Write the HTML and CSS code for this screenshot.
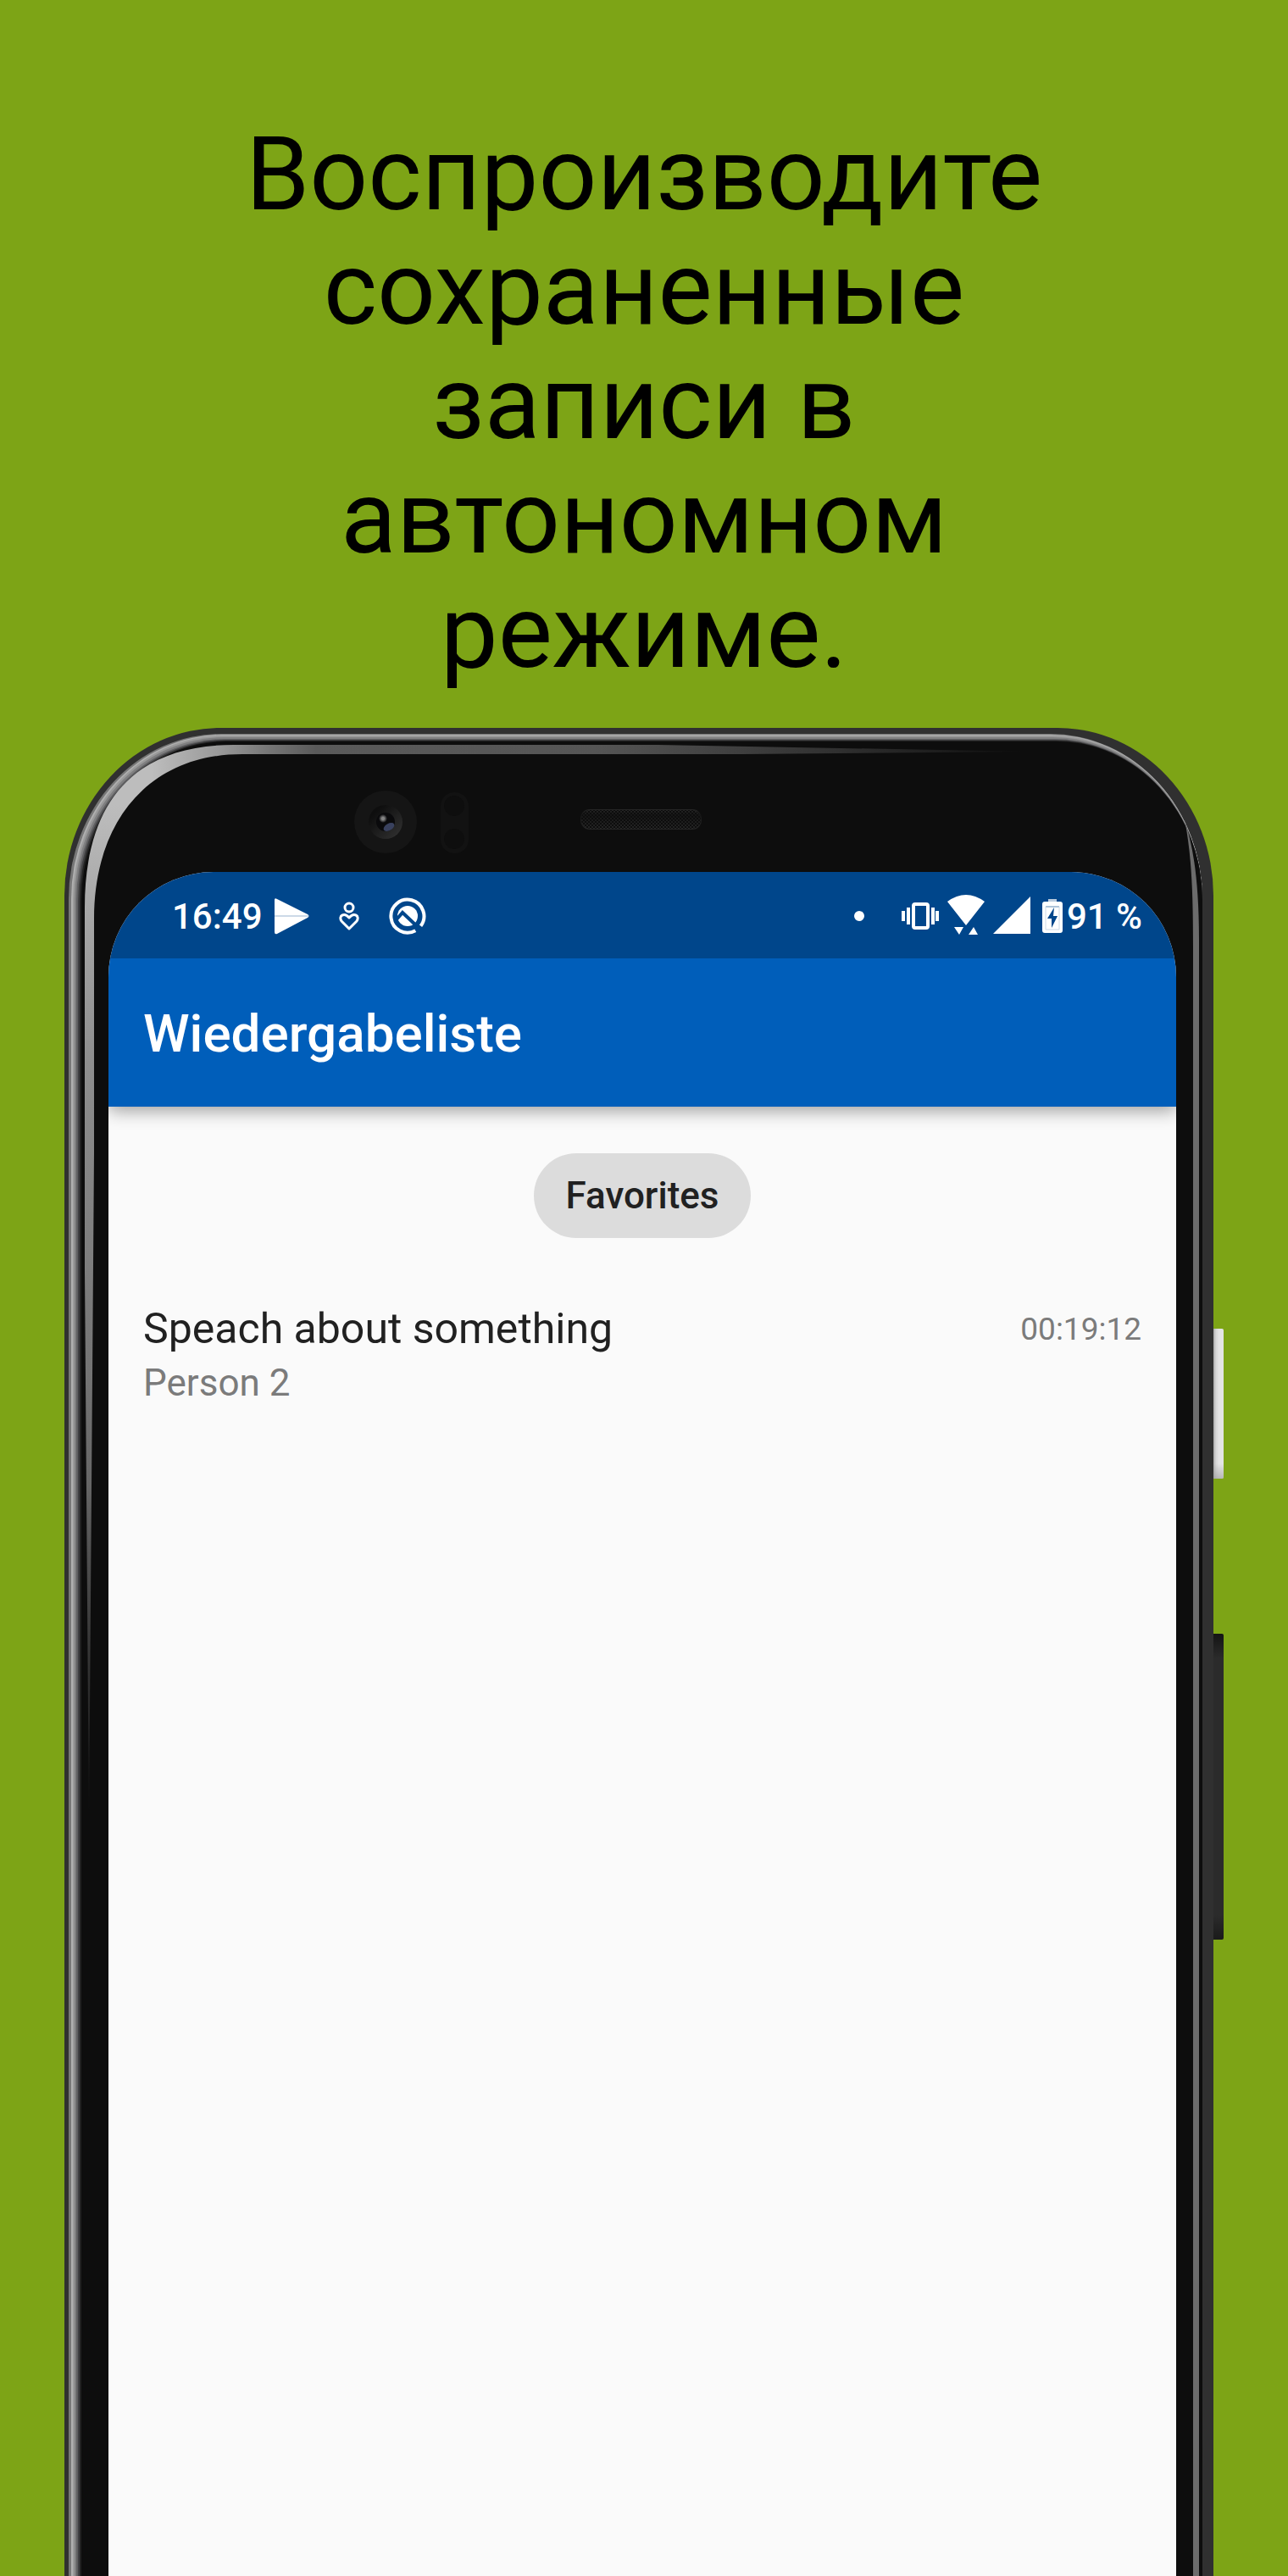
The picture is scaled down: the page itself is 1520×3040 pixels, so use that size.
FILE: index.html
```html
<!DOCTYPE html>
<html lang="ru">
<head>
<meta charset="utf-8">
<meta name="viewport" content="width=device-width, initial-scale=1">
<title>Wiedergabeliste</title>
<link rel="stylesheet" href="styles.css">
</head>
<body>
<h1 class="headline">Воспроизводите сохраненные записи в автономном режиме.</h1>
<main class="phone">
  <svg class="frame" viewBox="0 0 1356 2181" preserveAspectRatio="xMidYMin slice" aria-hidden="true">
    <defs>
      <linearGradient id="glossDown" gradientUnits="userSpaceOnUse" x1="0" y1="0" x2="0" y2="1293">
        <stop offset="0.07" stop-color="#bdbdbd"/><stop offset="0.16" stop-color="#a8a8a8"/><stop offset="0.3" stop-color="#8f8f8f"/><stop offset="0.59" stop-color="#747474"/><stop offset="0.69" stop-color="#666"/><stop offset="0.79" stop-color="#444"/><stop offset="1" stop-color="#0d0d0d"/>
      </linearGradient>
      <linearGradient id="glossAcross" gradientUnits="userSpaceOnUse" x1="0" y1="0" x2="1140" y2="0">
        <stop offset="0.09" stop-color="#bdbdbd"/><stop offset="0.16" stop-color="#999"/><stop offset="0.21" stop-color="#777"/><stop offset="0.26" stop-color="#5a5a5a"/><stop offset="0.55" stop-color="#555"/><stop offset="0.8" stop-color="#303030"/><stop offset="1" stop-color="#0d0d0d"/>
      </linearGradient>
      <linearGradient id="lensRing" x1="0" y1="0" x2="1" y2="1">
        <stop offset="0.2" stop-color="#0e0e0e"/><stop offset="1" stop-color="#343434"/>
      </linearGradient>
      <radialGradient id="glint"><stop offset="0.3" stop-color="#858585"/><stop offset="1" stop-color="#858585" stop-opacity="0"/></radialGradient>
      <linearGradient id="power" x1="0" y1="0" x2="1" y2="0">
        <stop offset="0" stop-color="#8c8c8c"/><stop offset="0.35" stop-color="#d4d4d4"/><stop offset="0.6" stop-color="#e4e4e4"/>
      </linearGradient>
      <linearGradient id="powerEnd" x1="0" y1="0" x2="0" y2="1">
        <stop offset="0.9" stop-color="#999" stop-opacity="0"/><stop offset="1" stop-color="#999" stop-opacity="0.6"/>
      </linearGradient>
      <linearGradient id="volume" x1="0" y1="0" x2="0" y2="1">
        <stop offset="0" stop-color="#141414"/><stop offset="0.08" stop-color="#2b2b2b"/><stop offset="0.92" stop-color="#2b2b2b"/><stop offset="1" stop-color="#1a1a1a"/>
      </linearGradient>
      <linearGradient id="rim" x1="0" y1="0" x2="0" y2="1">
        <stop offset="0" stop-color="#262626"/><stop offset="0.3" stop-color="#161616"/><stop offset="1" stop-color="#262626"/>
      </linearGradient>
      <pattern id="mesh" width="4" height="4" patternUnits="userSpaceOnUse"><path d="M0 0h2v2H0zM2 2h2v2H2z" fill="#0d0d0d"/></pattern>
      <clipPath id="sideHalf"><path d="M0 0H92V1400H0z"/></clipPath>
      <clipPath id="topHalf"><path d="M92 0H1356V400H92z"/></clipPath>
    </defs>
    <rect x="1354" y="709" width="14" height="177" rx="2" fill="url(#power)"/>
    <rect x="1354" y="709" width="14" height="177" rx="2" fill="url(#powerEnd)"/>
    <rect x="1354" y="1069" width="14" height="361" rx="2" fill="url(#volume)"/>
    <rect width="1356" height="2600" rx="184" ry="198" fill="#303030"/>
    <rect x="5" y="7" width="1338" height="2600" rx="180" ry="195" fill="#777"/>
    <rect x="8" y="8" width="1335" height="2600" rx="178" ry="194" fill="#b0b0b0"/>
    <rect x="10" y="9" width="1333" height="2600" rx="177" ry="193" fill="#9a9a9a"/>
    <rect x="12" y="11" width="1331" height="2600" rx="176" ry="192" fill="#7f7f80"/>
    <rect x="14" y="13" width="1329" height="2600" rx="175" ry="191" fill="#606062"/>
    <rect x="16" y="14" width="1327" height="2600" rx="174" ry="190" fill="#404042"/>
    <rect x="18" y="15" width="1325" height="2600" rx="173" ry="189" fill="#222"/>
    <rect x="20" y="16" width="1323" height="2600" rx="172" ry="188" fill="#0d0d0d"/>
    <g>
      <path clip-path="url(#sideHalf)" fill="url(#glossDown)" d="M29 1293L24 640V212C24 90 80 20 200 20H700L1140 28L800 31H210C100 31 35 110 35 225V500Z"/>
      <path clip-path="url(#topHalf)" fill="url(#glossAcross)" d="M29 1293L24 640V212C24 90 80 20 200 20H700L1140 28L800 31H210C100 31 35 110 35 225V500Z"/>
    </g>
    <path fill="#6c6c6c" d="M1322 108C1330 150 1332 190 1332 260V2600H1339V250C1339 180 1332 140 1322 108Z"/>
    <circle cx="379" cy="111" r="37" fill="#151515"/>
    <circle cx="379" cy="111" r="20" fill="url(#lensRing)"/>
    <circle cx="379" cy="111" r="11" fill="#0a0a0c"/>
    <ellipse cx="383" cy="117" rx="7" ry="4" fill="#39415e" transform="rotate(-30 383 117)"/>
    <circle cx="376" cy="107" r="5" fill="url(#glint)"/>
    <rect x="444" y="76" width="33" height="72" rx="16" fill="#121212"/>
    <circle cx="460" cy="92" r="12" fill="#0e0e0e"/><circle cx="460" cy="131" r="12" fill="#0e0e0e"/>
    <rect x="609" y="96" width="143" height="24" rx="11" fill="url(#rim)"/>
    <rect x="610" y="97" width="141" height="22" rx="10" fill="url(#mesh)"/>
  </svg>

  <section class="screen">
    <div class="status">
      <div class="status-left">
        <span class="clock">16:49</span>
        <svg width="42" height="48" viewBox="0 0 42 48"><path fill="#fff" d="M1 6Q1 3 4 5L40 23Q43 25 40 27L4 46Q1 47 1 44Z"/><path stroke="#ccd9e7" stroke-width="2" d="M1 25H41"/></svg>
        <svg width="24" height="48" viewBox="0 0 24 48" fill="none" stroke="#fff" stroke-width="3"><circle cx="12" cy="15" r="5"/><path stroke-linejoin="round" d="M12 40L3 31C-1 25 6 20 12 27C18 20 25 25 21 31Z"/></svg>
        <svg width="44" height="48" viewBox="0 0 44 48"><path fill="none" stroke="#fff" stroke-width="4" d="M37.5 36.8A19.5 19.5 0 1 0 31.3 42.2"/><circle cx="22" cy="25" r="12" fill="#fff"/><path fill="none" stroke="#00468b" stroke-width="4" d="M9 29L16 21L33 37"/></svg>
      </div>
      <div class="status-right">
        <svg class="dot" width="11" height="48" viewBox="0 0 11 48"><circle cx="5" cy="25" r="6" fill="#fff"/></svg>
        <svg width="44" height="48" viewBox="0 0 44 48"><rect x="14" y="11" width="17" height="28" rx="2" fill="none" stroke="#fff" stroke-width="4"/><path fill="#fff" d="M0 19h4v12H0zM6 15h4v20H6zM35 15h4v20h-4zM40 19h4v12h-4z"/></svg>
        <svg width="44" height="48" viewBox="0 0 44 48"><path fill="#fff" d="M0 8Q22 -8 44 8L22 36ZM8 38H19L14 47ZM25 47L31 38L36 47Z"/></svg>
        <svg width="44" height="48" viewBox="0 0 44 48"><path fill="#fff" d="M44 2V46H0Z"/></svg>
        <svg class="battery" width="24" height="48" viewBox="0 0 24 48"><path fill="#b9cbdd" d="M7 5H17V9H7z"/><rect y="8" width="24" height="37" rx="3" fill="#fff"/><path stroke="#5e89b4" stroke-width="1" fill="none" d="M4 14H20"/><path stroke="#cddae7" fill="none" d="M4 14V41H20V14"/><path fill="#00468b" d="M14 15L6 28H11V39L18 25H13Z"/></svg>
        <span>91 %</span>
      </div>
    </div>
    <header class="appbar"><h2 class="appbar-title">Wiedergabeliste</h2></header>
    <div class="content">
      <button class="chip" type="button">Favorites</button>
      <ul class="list">
        <li class="item">
          <div class="item-text">
            <div class="item-title">Speach about something</div>
            <div class="item-speaker">Person 2</div>
          </div>
          <time class="item-time">00:19:12</time>
        </li>
      </ul>
    </div>
  </section>
</main>
</body>
</html>
```
FILE: styles.css
```css
* { box-sizing: border-box; }
body {
  margin: 0;
  min-height: 100vh;
  display: flex;
  flex-direction: column;
  overflow-x: hidden;
  background: #7da416;
  font-family: Roboto, "Noto Sans", sans-serif;
}
.headline {
  max-width: 1000px;
  margin: 0 auto;
  padding: 139px 0 45px;
  font-size: 121px;
  line-height: 135px;
  font-weight: 400;
  text-align: center;
  color: #000;
}
.phone {
  position: relative;
  flex: 1;
  display: flex;
  margin: 0 88px 0 76px;
  padding: 170px 44px 0 52px;
}
.frame {
  position: absolute;
  inset: 0;
  width: 100%;
  height: 100%;
  overflow: visible;
}
.screen {
  position: relative;
  flex: 1;
  display: flex;
  flex-direction: column;
  border-radius: 124px 124px 0 0;
  overflow: hidden;
  background: #fafafa;
}
.status {
  position: relative;
  z-index: 1;
  display: flex;
  justify-content: space-between;
  align-items: center;
  height: 102px;
  padding: 0 40px 0 75px;
  background: #00468b;
  color: #fff;
  font-size: 42px;
  line-height: 50px;
  font-weight: 500;
}
.status-left, .status-right { display: flex; align-items: center; }
.status svg { display: block; }
.status span { padding-top: 3px; }
.status-left { gap: 35px; }
.clock { margin-right: -22px; }
.status-right { gap: 10px; }
.dot { margin-right: 34px; overflow: visible; }
.battery { margin: 0 -5px 0 4px; }
.appbar {
  position: relative;
  display: flex;
  align-items: center;
  height: 175px;
  padding: 2px 41px 0;
  background: #005eba;
  box-shadow: 0 4px 20px rgba(0, 0, 0, 0.4);
}
.appbar-title {
  margin: 0;
  color: #fff;
  font-size: 62px;
  line-height: 72px;
  font-weight: 500;
}
.content {
  display: flex;
  flex-direction: column;
  align-items: center;
  padding: 55px 41px;
}
.chip {
  height: 100px;
  padding: 0 37px;
  border: 0;
  border-radius: 50px;
  background: #dcdcdc;
  color: #212121;
  font: 500 44px/50px Roboto, "Noto Sans", sans-serif;
}
.list {
  width: 100%;
  margin: 78px 0 0;
  padding: 0;
  list-style: none;
}
.item { display: flex; justify-content: space-between; }
.item-title {
  color: #212121;
  font-size: 50px;
  line-height: 58px;
}
.item-speaker {
  margin-top: 10px;
  color: #7b7b7b;
  font-size: 44px;
  line-height: 50px;
}
.item-time {
  color: #7b7b7b;
  font-size: 37px;
  line-height: 60px;
}
```
